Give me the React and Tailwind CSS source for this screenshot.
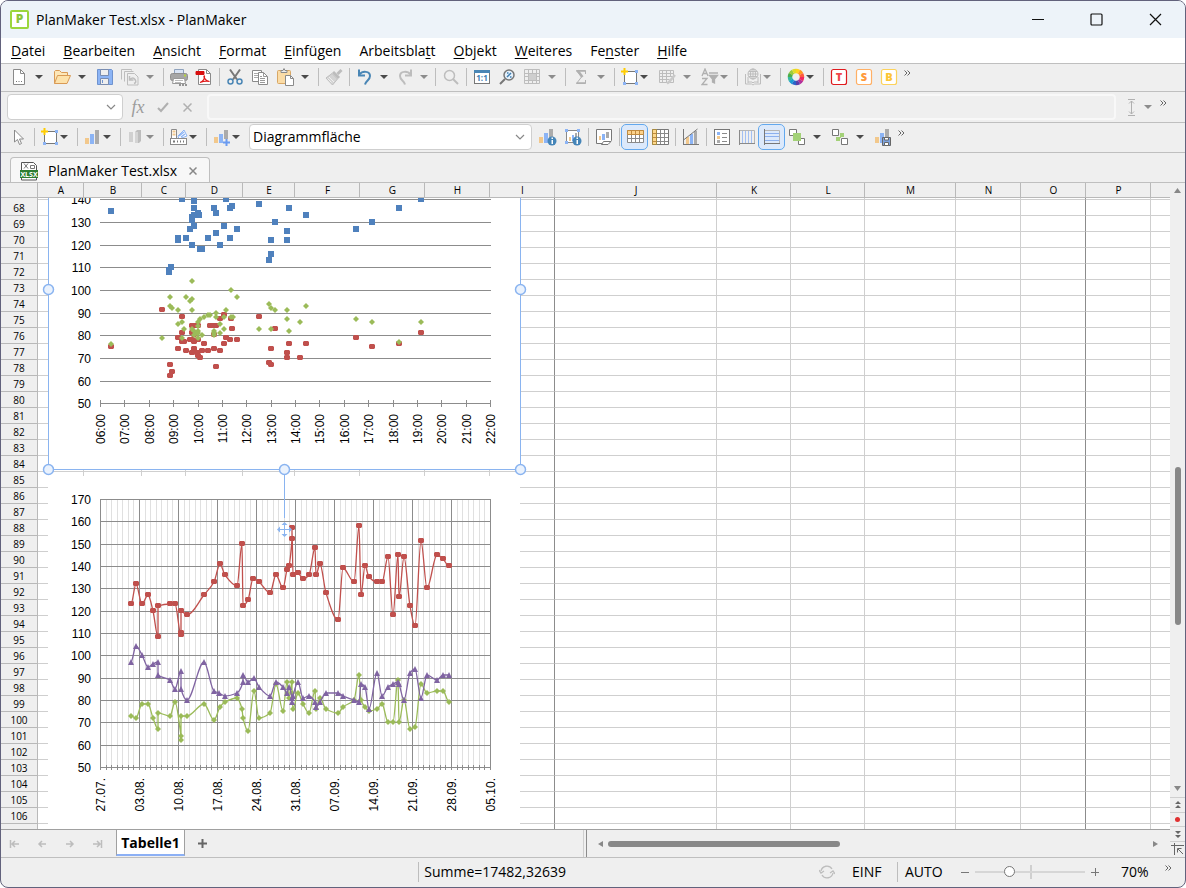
import React from 'react';
import clsx from 'clsx';

const GRAY = '#8a8a8a';
const PALE = '#bdbdbd';
const BLUE = '#8cb4f5';
const SAND = '#f2c88c';

/* ---------- icons ---------- */

const Svg = ({ children, size = 18, ...rest }) => (
  <svg width={size} height={size} viewBox="0 0 18 18" fill="none" stroke={GRAY} aria-hidden="true" {...rest}>
    {children}
  </svg>
);

const NewDoc = () => (
  <Svg>
    <path d="M3.5 1.5h7l4 4v11h-11z" fill="#fff" />
    <path d="M10.5 1.5v4h4" />
    <path d="M6 13.5h1M8.5 13.5h1M11 13.5h1" stroke="#777" />
  </Svg>
);

const Folder = () => (
  <Svg>
    <path d="M1.5 15.5v-12l1-1h4l2 2h6v3" fill="#fde7b8" stroke="#d99a55" />
    <path d="M1.5 15.5l3-8h13l-3.5 8z" fill="#fde2ab" stroke="#d99a55" />
  </Svg>
);

const Save = () => (
  <Svg>
    <path d="M1.5 1.5h14l1 1v14h-15z" fill={BLUE} stroke="#6f93cf" />
    <path d="M4.5 1.5h8v6h-8z" fill="#efefef" stroke="#7a8db0" />
    <path d="M4.5 10.5h8v6h-8z" fill="#efefef" stroke="#7a8db0" />
    <path d="M6.5 12v3" stroke="#6f93cf" />
  </Svg>
);

const History = () => (
  <Svg stroke={PALE}>
    <path d="M.5 11.5v-10h10v1M3.5 13.500v-10h9" />
    <path d="M6.5 5.5h7l3.500 3.500v8h-10.500z" fill="#efefef" />
    <path d="M8.5 8v4h4M9 11.500q3-3 5 0t-1 4" strokeWidth="1.5" />
  </Svg>
);

const Printer = () => (
  <Svg>
    <path d="M4.5 6v-4.5h9v4.5" fill="#d9e4f5" stroke="#8fa2bd" />
    <rect x=".5" y="5.5" width="17" height="7" rx="2" fill="#a6a6a6" stroke="#8f8f8f" />
    <path d="M14 7.5h2" stroke="#b4d33a" strokeWidth="2" />
    <path d="M3.5 10.5h11l1 5h-13z" fill="#fff" stroke="#999" />
    <path d="M5 12.5h8M5 14.5h6" stroke="#bbb" />
    <path d="M9 17h2M12 17h2M15 17h2" stroke="#777" strokeWidth="1.5" />
  </Svg>
);

const Pdf = () => (
  <Svg>
    <path d="M3.5 1.5h8l4 4v11h-12z" fill="#fff" />
    <path d="M11.5 1.5v4h4" />
    <path d="M1 3.5h8v3H1z" fill="#d80f0f" stroke="#d80f0f" />
    <path d="M5 14.5c3-1 5-4 4.500-6.500-1.500-.5 0 5 5 5.500-3-1-7 0-9.500 1" stroke="#e01818" strokeWidth="1.2" />
  </Svg>
);

const Scissors = () => (
  <Svg strokeWidth="1.5">
    <path d="M4 1.5l7 10M14 1.5l-7 10" stroke="#777" strokeWidth="2" />
    <circle cx="4.5" cy="13.5" r="2.5" stroke="#4a86b5" />
    <circle cx="13.5" cy="13.5" r="2.5" stroke="#4a86b5" />
  </Svg>
);

const Copy = () => (
  <Svg>
    <path d="M1.5 2.5h9v11h-9z" fill="#fff" />
    <path d="M3 5.5h4M3 7.5h4M3 9.5h4" stroke="#aaa" />
    <path d="M7.5 4.5h5l4 4v8h-9z" fill="#fff" />
    <path d="M12.5 4.5v4h4M9 8.5h2M9 10.5h5M9 12.5h5M9 14.5h5" stroke="#999" />
  </Svg>
);

const Paste = () => (
  <Svg>
    <rect x="1.5" y="2.5" width="13" height="13" rx="1" fill="#fbdca6" stroke="#d8a765" />
    <path d="M5 4.5v-2h2l1-2 1 2h2v2z" fill="#eee" />
    <path d="M9.5 7.5h5l3 3v7h-8z" fill="#fff" />
    <path d="M14.5 7.5v3h3" />
  </Svg>
);

const Brush = () => (
  <Svg stroke={PALE}>
    <path d="M16.5 2l-4 4" strokeWidth="3" />
    <path d="M8 4l6 6" strokeWidth="3" />
    <path d="M7 5.5l5.500 5.500-5 6-6.500-7z" fill="#d4d4d4" />
    <path d="M4 9l5 5M2.500 10.500l4 4" stroke="#efefef" />
  </Svg>
);

const Undo = () => (
  <Svg stroke="#4a86b5" strokeWidth="2">
    <path d="M3 1.5v6h6" />
    <path d="M3.5 6.5c3-4 10.500-3.500 10.500 1.500 0 4-4 4.500-5 8.500" />
  </Svg>
);

const Redo = () => (
  <Svg stroke={PALE} strokeWidth="2">
    <path d="M15 1.5v6h-6" />
    <path d="M14.5 6.5c-3-4-10.500-3.500-10.500 1.500 0 4 4 4.500 5 8.500" />
  </Svg>
);

const Lens = () => (
  <Svg stroke={PALE} strokeWidth="1.5">
    <circle cx="7.5" cy="7.5" r="5" />
    <path d="M11 11l5 5" strokeWidth="2" />
  </Svg>
);

const OneToOne = () => (
  <Svg>
    <rect x="1.5" y="2.5" width="15" height="13" fill="#fff" stroke="#777" />
    <path d="M1 3.5h16" stroke="#4a86b5" strokeWidth="3" />
    <text x="9" y="13" fontSize="8" fontWeight="700" textAnchor="middle" fill="#3f7fb2" stroke="none" fontFamily="Open Sans, sans-serif">1:1</text>
  </Svg>
);

const ZoomPercent = () => (
  <Svg>
    <circle cx="11" cy="7" r="5" fill="#e6f1fb" stroke="#777" strokeWidth="1.5" />
    <path d="M7 11l-5 5" stroke="#777" strokeWidth="2" />
    <path d="M9 9l4-4M9 5h1.500M12 9h1.500" stroke="#3f7fb2" strokeWidth="1.5" />
  </Svg>
);

const GridPale = () => (
  <Svg stroke={PALE}>
    <path d="M1.5 1.5h15v14h-15zM1.5 5.5h15M1.5 8.5h15M1.5 12.5h15M5.5 1.5v14M9.5 1.5v14M13.5 1.5v14" />
    <path d="M6 6h7v6h-7z" fill="#cfcfcf" stroke="none" />
  </Svg>
);

const Sigma = () => (
  <Svg stroke="#b0b0b0">
    <path d="M13.5 6v-3.500h-9l5 6.500-5 6.500h9v-3.500" />
    <path d="M5.500 2.500l5 6.500" strokeWidth="2.5" />
    <path d="M4.500 15h9M4.500 3h9" strokeWidth="1.5" />
  </Svg>
);

const NewObject = () => (
  <Svg>
    <rect x="3.5" y="3.5" width="12" height="12" fill="#fff" stroke="#777" />
    <path d="M14 2h3v3h-3zM2 14h3v3h-3zM14 14h3v3h-3z" fill={BLUE} stroke="none" />
    <path d="M3.5 0v7M0 3.5h7" stroke="#fc0" strokeWidth="2" />
  </Svg>
);

const GridEdit = () => (
  <Svg stroke={PALE}>
    <path d="M1.5 2.5h14v12h-14zM1.5 5.5h14M1.5 8.5h14M1.5 11.5h10M4.5 2.5v12M8.5 2.5v12M12.5 2.5v6" />
    <path d="M17 7l-6 7-2 1.500" strokeWidth="2.5" stroke="#c9c9c9" />
  </Svg>
);

const SortFilter = () => (
  <Svg stroke="#b0b0b0" strokeWidth="1.3">
    <path d="M1 8l3-7 3 7M2 5.500h4M1 10.500h5l-5 6h5.500" />
    <path d="M8 5h9" />
    <path d="M8.500 7.500h8l-3 3.500v4l-2-1v-3z" fill="#b0b0b0" />
  </Svg>
);

const Globe = () => (
  <Svg stroke={PALE}>
    <path d="M1.5 6v10h6l1.500 1 1.500-1h6v-10" />
    <path d="M4 15v-6M14 15v-6M4 14h4l1 1 1-1h4" />
    <circle cx="9" cy="6" r="5" fill="#efefef" />
    <path d="M4 6h10M9 1v10M5 3.500h8M5 8.500h8" />
    <ellipse cx="9" cy="6" rx="2.5" ry="5" />
  </Svg>
);

const wheelColors = ['#ffd21f', '#ff9a1f', '#ff5a3c', '#f2265e', '#b2309b', '#5a3fa8', '#2a64c8', '#1c9ad6', '#38b8a0', '#4cae4c', '#9ccc3c', '#e0dc28'];

const ColorWheel = () => (
  <Svg>
    {wheelColors.map((c, i) => (
      <circle key={c} cx="9" cy="9" r="6" stroke={c} strokeWidth="4.5" strokeDasharray="3.2 100" transform={`rotate(${i * 30 - 90} 9 9)`} />
    ))}
  </Svg>
);

const LetterBadge = ({ letter, color, line }) => (
  <Svg>
    <rect x="1.5" y="1.5" width="15" height="15" rx="2" fill="#fff" stroke={line} strokeWidth="1.2" />
    <text x="9" y="13" fontSize="11" fontWeight="800" textAnchor="middle" fill={color} stroke="none" fontFamily="Open Sans, sans-serif">{letter}</text>
  </Svg>
);

const Cursor = () => (
  <Svg>
    <path d="M4.5 2v12l3-2.500 2 5 2-1-2-4.500h4z" fill="#fff" />
  </Svg>
);

const Bars = () => (
  <Svg stroke="none">
    <path d="M1 10h4v6h-4z" fill={SAND} />
    <path d="M6 6h4v10h-4z" fill={BLUE} />
    <path d="M11 2h4v14h-4z" fill="#ababab" />
  </Svg>
);

const BarsPale = () => (
  <Svg stroke="none">
    <path d="M2 4h4v10h-4z" fill="#d0d0d0" />
    <path d="M8 4l2-2h4v11l-2 2h-4z" fill="#bdbdbd" />
    <path d="M8 4h3v11h-3z" fill="#d4d4d4" />
  </Svg>
);

const ChartStyle = () => (
  <Svg>
    <path d="M1.5 1.5h5v9h-5z" fill="#fff" />
    <path d="M2.5 3.5h3M2.5 6.5h3" stroke={SAND} strokeWidth="2" />
    <path d="M8 8l6-6 3 6-8 3z" fill="#fff" stroke={BLUE} />
    <path d="M9 8l5-4M11 9l4-3" stroke={BLUE} strokeWidth="1.5" />
    <rect x=".5" y="10.5" width="16" height="6" fill="#fff" />
    <path d="M3 13.5h2M7 13.5h1M10 13.5h1M13 13.5h1" stroke="#777" strokeWidth="2" />
  </Svg>
);

const BarsPlus = () => (
  <Svg stroke="none">
    <path d="M1 9h4v6h-4z" fill={SAND} />
    <path d="M6 6h4v9h-4z" fill={BLUE} />
    <path d="M11 2h4v9h-4z" fill="#ababab" />
    <path d="M13.5 11v7M10 14.5h7" stroke="#6b9bf0" strokeWidth="2" />
  </Svg>
);

const InfoDot = () => (
  <g stroke="none">
    <circle cx="13" cy="13" r="4.5" fill="#4585b8" />
    <path d="M12.5 12h1.500v4h-1.500zM12.500 9.500h1.500v1.500h-1.500z" fill="#fff" />
  </g>
);

const BarsInfo = () => (
  <Svg stroke="none">
    <path d="M0 9h4v6h-4z" fill={SAND} />
    <path d="M5 5h4v10h-4z" fill={BLUE} />
    <path d="M10 1h4v9h-4z" fill="#ababab" />
    <InfoDot />
  </Svg>
);

const FrameInfo = () => (
  <Svg>
    <rect x="2.5" y="2.5" width="12" height="12" fill="#fff" />
    <path d="M1 1h3v3h-3zM13 1h3v3h-3zM1 13h3v3h-3z" fill={BLUE} stroke="none" />
    <path d="M5 9h2v4h-2z" fill={SAND} stroke="none" />
    <path d="M8 7h2v6h-2z" fill={BLUE} stroke="none" />
    <path d="M11 5h2v4h-2z" fill="#ababab" stroke="none" />
    <InfoDot />
  </Svg>
);

const ChartSheet = () => (
  <Svg>
    <path d="M1.5 1.5h15v11l-3 3h-12z" fill="#fff" stroke="#777" />
    <path d="M4 8h2v4h-2z" fill={SAND} stroke="none" />
    <path d="M7 6h3v6h-3z" fill={BLUE} stroke="none" />
    <path d="M11 4h3v6h-3z" fill="#ababab" stroke="none" />
    <path d="M6.5 16.5l2-3h7.500l-3 3z" fill="#fff" stroke="#777" />
  </Svg>
);

const RowsTable = () => (
  <Svg>
    <path d="M1.5 2.5h16v12h-16z" fill="#fff" />
    <path d="M1.5 2.5h16v4h-16z" fill="#fcd28c" stroke="#c08a3e" />
    <path d="M1.5 10.5h16M5.5 7v7.500M9.5 7v7.500M13.5 7v7.500" />
    <path d="M5.5 3v3M9.5 3v3M13.5 3v3" stroke="#c08a3e" />
  </Svg>
);

const ColsTable = () => (
  <Svg>
    <path d="M1.5 1.5h16v15h-16z" fill="#fff" stroke="#777" />
    <path d="M1.5 1.5h4v15h-4z" fill="#fcd88c" stroke="#a98a3e" />
    <path d="M6 5.5h11M6 9.5h11M6 13.5h11M9.5 2v14M13.5 2v14" />
    <path d="M2 5.5h3M2 9.5h3M2 13.5h3" stroke="#c08a3e" />
  </Svg>
);

const TrendChart = () => (
  <Svg>
    <path d="M4 9h3v7h-3z" fill={SAND} stroke="none" />
    <path d="M8 6h3v10h-3z" fill={BLUE} stroke="none" />
    <path d="M12 3h3v13h-3z" fill="#ababab" stroke="none" />
    <path d="M1.5 1v16M1 16.5h16M1.5 12l14-11" stroke="#777" />
  </Svg>
);

const Legend = () => (
  <Svg>
    <rect x="1.5" y="1.5" width="15" height="15" fill="#fff" stroke="#777" />
    <path d="M4 4h3v3h-3z" fill={BLUE} stroke="none" />
    <path d="M4 8h3v3h-3z" fill={SAND} stroke="none" />
    <path d="M4 12h3v3h-3z" fill="#ababab" stroke="none" />
    <path d="M9 5.5h5M9 9.5h5M9 13.5h5" />
  </Svg>
);

const VLines = () => (
  <Svg>
    <path d="M2 2.5h14.500v13" stroke="#b5b5b5" />
    <path d="M4.5 3v12M7.5 3v12M10.5 3v12M13.5 3v12" stroke="#a3c0f3" />
    <path d="M1.5 2v15M1 15.5h16" />
  </Svg>
);

const HLines = () => (
  <Svg>
    <path d="M2 2.5h14.500v13" stroke="#b5b5b5" />
    <path d="M2 5.5h14M2 8.5h14M2 12.5h14" stroke="#8cb0ee" />
    <path d="M1.5 1v16M1 15.5h16" stroke="#777" />
  </Svg>
);

const ToFront = () => (
  <Svg>
    <path d="M1.5 1.5h7v6h-7zM10.5 10.5h6v6h-6z" fill="#fff" stroke="#777" />
    <path d="M5 5h8v8h-8z" fill="#a3d177" stroke="none" />
  </Svg>
);

const Arrange = () => (
  <Svg>
    <path d="M9 5h4v4h-4zM5 9h4v4h-4zM9 9h1v1h-1z" fill="#a3d177" stroke="none" />
    <path d="M1.5 1.500h6v6h-6zM10.500 10.500h6v6h-6z" fill="#fff" stroke="#777" />
  </Svg>
);

const BarsSave = () => (
  <Svg stroke="none">
    <path d="M1 9h4v6h-4z" fill={SAND} />
    <path d="M6 5h4v10h-4z" fill={BLUE} />
    <path d="M11 1h4v8h-4z" fill="#ababab" />
    <path d="M8.5 9.5h8v8h-8z" fill="#7ea3dd" stroke="#666" />
    <path d="M10.5 9.5h4v2.500h-4zM10.5 14.5h4v3h-4z" fill="#fff" stroke="#666" />
  </Svg>
);

const Chevron = ({ className }) => (
  <svg width="10" height="6" viewBox="0 0 10 6" className={className} fill="none" stroke="#888" strokeWidth="1.2" aria-hidden="true">
    <path d="M1 1l4 4 4-4" />
  </svg>
);

/* ---------- toolbar parts ---------- */

const Tool = ({ label, icon, active }) => (
  <button type="button" aria-label={label} className={clsx('flex h-6 w-[25px] shrink-0 items-center justify-center rounded', active && 'bg-[#dce9fb] outline outline-[#62a8ee]')}>
    {icon}
  </button>
);

const Caret = ({ off, near, className }) => (
  <button type="button" aria-label="Weitere Optionen" className={clsx('flex h-6 shrink-0 items-center justify-center', near ? '-ml-1.5 mr-[3px] w-[15px]' : className || 'mr-[3px] w-[15px]')}>
    <svg width="8" height="4" viewBox="0 0 8 4" fill={off ? '#8c8c8c' : '#4a4a4a'} aria-hidden="true">
      <path d="M0 0h8l-4 4z" />
    </svg>
  </button>
);

const Sep = () => <span className="ml-[3px] mr-0.5 h-[18px] w-px shrink-0 bg-[#bdbdbd]" />;

const More = () => (
  <button type="button" aria-label="Mehr" className="mb-2 -ml-0.5 flex w-4 shrink-0 justify-center">
    <svg width="7" height="6" viewBox="0 0 7 6" fill="none" stroke="#666" aria-hidden="true">
      <path d="M.5 .5l2.500 2.500-2.500 2.500M3.500 .5l2.500 2.500-2.500 2.500" />
    </svg>
  </button>
);

const TitleBar = () => (
  <header className="flex h-[37px] items-center bg-[#edf3f9] pl-2">
    <svg width="20" height="20" viewBox="0 0 20 20" className="mr-[7px] shrink-0" aria-hidden="true">
      <rect x="2" y="1" width="17" height="17" rx="1" fill="#fff" stroke="#9bd63c" strokeWidth="2" />
      <text x="10.5" y="13" fontSize="12" fontWeight="800" textAnchor="middle" fill="#8cc43c" fontFamily="Open Sans, sans-serif">P</text>
    </svg>
    <h1 className="flex-1 truncate text-sm">PlanMaker Test.xlsx - PlanMaker</h1>
    <div className="flex">
      <button type="button" aria-label="Minimieren" className="flex h-9 w-[58px] items-center justify-center">
        <svg width="12" height="12" stroke="#111"><path d="M0 5.5h12" /></svg>
      </button>
      <button type="button" aria-label="Maximieren" className="flex h-9 w-[58px] items-center justify-center">
        <svg width="13" height="13" fill="none" stroke="#111" strokeWidth="1.2"><rect x="1" y="1" width="11" height="11" rx="1" /></svg>
      </button>
      <button type="button" aria-label="Schließen" className="flex h-9 w-[60px] items-center justify-center">
        <svg width="13" height="13" stroke="#111" strokeWidth="1.2"><path d="M1 1l11 11M12 1l-11 11" /></svg>
      </button>
    </div>
  </header>
);

// [before, access key, after]
const menus = [
  ['', 'D', 'atei'],
  ['', 'B', 'earbeiten'],
  ['', 'A', 'nsicht'],
  ['', 'F', 'ormat'],
  ['', 'E', 'infügen'],
  ['Arbeitsbla', 't', 't'],
  ['', 'O', 'bjekt'],
  ['', 'W', 'eiteres'],
  ['Fe', 'n', 'ster'],
  ['', 'H', 'ilfe'],
];

const MenuBar = () => (
  <nav className="flex h-[25px] items-center bg-white pl-px text-sm">
    {menus.map(([pre, key, post]) => (
      <button type="button" key={pre + key + post} className="px-[9px]">
        {pre}
        <span className="underline underline-offset-2">{key}</span>
        {post}
      </button>
    ))}
  </nav>
);

const StandardBar = () => (
  <div className="flex h-7 items-center border-t border-[#bfbfbf] pb-0.5 pl-[5px]">
    <Tool label="Neu" icon={<NewDoc />} />
    <Caret />
    <Tool label="Öffnen" icon={<Folder />} />
    <Caret />
    <Tool label="Speichern" icon={<Save />} />
    <Tool label="Versionen" icon={<History />} />
    <Caret off />
    <Sep />
    <Tool label="Drucken" icon={<Printer />} />
    <Tool label="PDF-Export" icon={<Pdf />} />
    <Sep />
    <Tool label="Ausschneiden" icon={<Scissors />} />
    <Tool label="Kopieren" icon={<Copy />} />
    <Tool label="Einfügen" icon={<Paste />} />
    <Caret />
    <Sep />
    <Tool label="Format übertragen" icon={<Brush />} />
    <Sep />
    <Tool label="Rückgängig" icon={<Undo />} />
    <Caret className="mr-0.5 w-[13px]" />
    <Tool label="Wiederherstellen" icon={<Redo />} />
    <Caret off className="mr-0.5 w-[13px]" />
    <Sep />
    <Tool label="Suchen" icon={<Lens />} />
    <Sep />
    <Tool label="Originalgröße" icon={<OneToOne />} />
    <Tool label="Zoomstufe" icon={<ZoomPercent />} />
    <Tool label="Fixieren" icon={<GridPale />} />
    <Caret off />
    <Sep />
    <Tool label="Summe" icon={<Sigma />} />
    <Caret off />
    <Sep />
    <Tool label="Rahmen einfügen" icon={<NewObject />} />
    <Caret near />
    <Tool label="Tabelle bearbeiten" icon={<GridEdit />} />
    <Caret off />
    <Tool label="Sortieren und filtern" icon={<SortFilter />} />
    <Caret off near />
    <Sep />
    <Tool label="Recherche" icon={<Globe />} />
    <Caret off near />
    <Sep />
    <Tool label="Farben" icon={<ColorWheel />} />
    <Caret near />
    <Sep />
    <Tool label="TextMaker" icon={<LetterBadge letter="T" color="#f0484b" line="#e01b1f" />} />
    <Tool label="Presentations" icon={<LetterBadge letter="S" color="#ff9a3c" line="#ffb066" />} />
    <Tool label="BasicMaker" icon={<LetterBadge letter="B" color="#fcc534" line="#fcd25c" />} />
    <More />
  </div>
);

const FormulaBar = () => (
  <div className="flex h-[31px] items-center border-t border-[#bfbfbf] pl-1.5">
    <div className="relative h-[26px] w-[116px] shrink-0">
      <select aria-label="Namensfeld" className="h-full w-full appearance-none rounded border border-[#cfcfcf] bg-white">
        <option></option>
      </select>
      <Chevron className="pointer-events-none absolute right-[7px] top-2.5" />
    </div>
    <button type="button" aria-label="Funktion einfügen" className="ml-[3px] flex w-6 shrink-0 justify-center font-['Liberation_Serif',serif] text-lg leading-6 text-[#9c9c9c] italic">fx</button>
    <button type="button" aria-label="Übernehmen" className="flex w-[25px] shrink-0 justify-center">
      <svg width="12" height="11" fill="none" stroke="#b0b0b0" strokeWidth="2"><path d="M1 6l3 3 7-8" /></svg>
    </button>
    <button type="button" aria-label="Verwerfen" className="flex w-[25px] shrink-0 justify-center">
      <svg width="9" height="9" stroke="#b0b0b0" strokeWidth="1.5"><path d="M.5 .5l8 8M8.500 .5l-8 8" /></svg>
    </button>
    <input aria-label="Formel" disabled className="ml-[7px] h-[26px] min-w-0 flex-1 rounded border-2 border-[#f8f8f8] bg-[#efefef] px-2 text-sm" />
    <button type="button" aria-label="Höhe" className="ml-[3px] flex w-[25px] shrink-0 justify-center">
      <svg width="9" height="17" fill="none" stroke="#b0b0b0"><path d="M1 .5h7M1 16.5h7M4.5 2v13M2 4.5l2.500-2.500 2.500 2.500M2 12.500l2.500 2.500 2.500-2.500" /></svg>
    </button>
    <Caret off className="-ml-1 w-[15px]" />
    <span className="mr-3.5 ml-0.5 flex">
      <More />
    </span>
  </div>
);

const ChartBar = () => (
  <div className="flex h-[30px] items-center border-t border-[#bfbfbf] pb-px pl-[5px]">
    <Tool label="Objekte auswählen" icon={<Cursor />} />
    <Sep />
    <Tool label="Objekt einfügen" icon={<NewObject />} />
    <Caret near />
    <Sep />
    <Tool label="Diagrammtyp" icon={<Bars />} />
    <Caret near />
    <Sep />
    <Tool label="3D-Ansicht" icon={<BarsPale />} />
    <Caret off near />
    <Sep />
    <Tool label="Farbpalette" icon={<ChartStyle />} />
    <Caret near />
    <Sep />
    <Tool label="Element hinzufügen" icon={<BarsPlus />} />
    <Caret near />
    <div className="relative mr-[3px] ml-[3px] h-[26px] w-[283px] shrink-0">
      <select aria-label="Diagrammelement" className="h-full w-full appearance-none rounded border border-[#cfcfcf] bg-white px-[3px] text-sm">
        <option>Diagrammfläche</option>
      </select>
      <Chevron className="pointer-events-none absolute right-[7px] top-2.5" />
    </div>
    <Tool label="Diagrammeigenschaften" icon={<BarsInfo />} />
    <Tool label="Objekteigenschaften" icon={<FrameInfo />} />
    <Sep />
    <Tool label="Diagrammblatt" icon={<ChartSheet />} />
    <Sep />
    <Tool label="Datenreihen in Zeilen" icon={<RowsTable />} active />
    <Tool label="Datenreihen in Spalten" icon={<ColsTable />} />
    <Sep />
    <Tool label="Trendlinie" icon={<TrendChart />} />
    <Sep />
    <Tool label="Legende" icon={<Legend />} />
    <Tool label="Vertikale Gitternetzlinien" icon={<VLines />} />
    <Tool label="Horizontale Gitternetzlinien" icon={<HLines />} active />
    <Tool label="Nach vorne" icon={<ToFront />} />
    <Caret />
    <Tool label="Anordnen" icon={<Arrange />} />
    <Caret />
    <Tool label="Als Grafik speichern" icon={<BarsSave />} />
    <More />
  </div>
);

const DocTabs = () => (
  <div className="flex h-[31px] items-end border-y border-[#bfbfbf] pl-[9px]">
    <div className="flex h-[25px] w-[200px] items-center rounded-t border border-b-0 border-[#bfbfbf] bg-[#f7f7f7] pt-px pl-[9px]">
      <svg width="18" height="20" viewBox="0 0 18 20" className="mr-2.5 shrink-0" aria-hidden="true">
        <path d="M1.5 9v-7.500h12l3 3v14.500h-15z" fill="#fff" stroke="#555" />
        <path d="M4 2.500l4 5M8 2.500l-4 5M10.500 7.500v-3h4v3z" fill="none" stroke="#777" />
        <path d="M0 9h18v8h-18z" fill="#2f7d32" />
        <text x="9" y="16" fontSize="7" fontWeight="700" textAnchor="middle" fill="#fff" fontFamily="Open Sans, sans-serif">XLSX</text>
      </svg>
      <span className="text-sm">PlanMaker Test.xlsx</span>
      <button type="button" aria-label="Tab schließen" className="ml-3">
        <svg width="8" height="8" stroke="#888" strokeWidth="1.5"><path d="M.5 .5l7 7M7.500 .5l-7 7" /></svg>
      </button>
    </div>
  </div>
);

/* ---------- worksheet ---------- */

const columns = [
  ['A', 46], ['B', 58], ['C', 44], ['D', 57], ['E', 52], ['F', 65], ['G', 65], ['H', 65], ['I', 65],
  ['J', 162], ['K', 74], ['L', 74], ['M', 91], ['N', 65], ['O', 65], ['P', 65],
];
const rows = Array.from({ length: 39 }, (_, i) => 68 + i);
const pageEnd = ['I', 'O'];

const cellClass = (name) => clsx('border-r border-b border-b-[#cfcfcf] p-0', pageEnd.includes(name) ? 'border-r-[#8c8c8c]' : 'border-r-[#cfcfcf]');

const Grid = () => (
  <table className="w-full table-fixed border-separate border-spacing-0 bg-white text-center text-[10px] leading-[14px]">
    <colgroup>
      <col className="w-[37px]" />
      {columns.map(([name, width]) => (
        <col key={name} style={{ width }} />
      ))}
      <col />
    </colgroup>
    <thead>
      <tr className="h-[15px] bg-[#efefef]">
        <th className="border-r border-b border-[#b9b9b9] p-0" />
        {columns.map(([name]) => (
          <th key={name} className="border-r border-b border-[#b9b9b9] p-0 pl-px font-normal">{name}</th>
        ))}
        <th className="border-b border-[#b9b9b9] p-0" />
      </tr>
    </thead>
    <tbody>
      <tr className="h-0.5">
        <th className="border-r border-[#b9b9b9] bg-[#efefef] p-0" />
        {columns.map(([name]) => (
          <td key={name} className={cellClass(name)} />
        ))}
        <td className="border-b border-[#cfcfcf] p-0" />
      </tr>
      {rows.map((n) => (
        <tr key={n} className="h-4">
          <th className="border-r border-b border-[#b9b9b9] bg-[#efefef] p-0 font-normal">{n}</th>
          {columns.map(([name]) => (
            <td key={name} className={cellClass(name)} />
          ))}
          <td className="border-b border-[#cfcfcf] p-0" />
        </tr>
      ))}
      <tr className="h-4">
        <th className="border-r border-[#b9b9b9] bg-[#efefef] p-0" />
        {columns.map(([name]) => (
          <td key={name} className={cellClass(name)} />
        ))}
        <td />
      </tr>
    </tbody>
  </table>
);

/* ---------- charts ---------- */

// x is the distance from the value axis, y the measured value
const systolic = [
  [11, 135], [82, 140], [94, 140], [94, 139], [94, 136], [94, 133], [98, 134], [99, 133], [92, 132], [92, 131], [94, 128], [90, 127],
  [78, 123], [78, 122], [86, 123], [92, 120], [100, 118], [102, 118], [108, 123], [114, 136], [116, 134], [116, 125], [120, 120],
  [124, 128], [126, 140], [130, 136], [132, 137], [130, 123], [137, 127], [159, 138], [175, 130], [171, 122], [171, 116], [169, 113],
  [187, 126], [187, 122], [189, 136], [71, 110], [69, 109], [69, 108], [206, 133], [256, 127], [272, 130], [299, 136], [321, 140],
];
const diastolic = [
  [11, 75], [62, 91], [70, 67], [72, 64], [70, 62], [78, 79], [78, 74], [82, 88], [82, 81], [82, 77], [84, 77], [86, 73], [92, 84],
  [96, 84], [98, 84], [92, 81], [94, 80], [90, 78], [92, 78], [94, 77], [98, 78], [92, 72], [94, 74], [97, 72], [98, 71], [100, 70],
  [102, 73], [104, 76], [108, 73], [114, 74], [110, 84], [112, 84], [116, 84], [114, 80], [120, 87], [124, 89], [131, 87], [132, 83],
  [126, 79], [130, 78], [137, 78], [124, 76], [120, 73], [116, 66], [159, 88], [175, 83], [171, 74], [169, 68], [171, 67], [187, 72],
  [187, 70], [189, 76], [200, 70], [206, 76], [256, 79], [272, 75], [299, 76], [321, 81],
];
const pulse = [
  [11, 76], [92, 104], [131, 100], [70, 97], [86, 97], [90, 95], [92, 96], [137, 97], [70, 93], [72, 92], [78, 91], [92, 91], [78, 85],
  [82, 86], [84, 83], [82, 79], [62, 79], [110, 89], [108, 89], [116, 90], [126, 91], [104, 88], [100, 87], [98, 86], [116, 88],
  [124, 88], [131, 88], [133, 88], [98, 84], [92, 83], [94, 82], [98, 82], [96, 81], [98, 81], [94, 80], [98, 79], [102, 80],
  [114, 82], [114, 81], [114, 80], [120, 85], [124, 83], [120, 81], [159, 83], [171, 83], [169, 94], [171, 92], [175, 91],
  [187, 91], [187, 87], [189, 82], [200, 86], [206, 93], [256, 87], [272, 86], [299, 77], [321, 86],
];

const redLine = [
  [31, 123], [36, 132], [42, 123], [48, 127], [53, 120], [58, 108], [58, 122], [70, 123], [75, 123], [81, 109], [81, 110], [81, 120],
  [87, 118], [104, 127], [114, 133], [120, 141], [125, 136], [137, 131], [142, 150], [143, 122], [148, 125], [153, 134], [159, 133],
  [170, 128], [176, 136], [183, 130], [187, 138], [189, 140], [192, 152], [192, 157], [193, 136], [198, 137], [203, 134], [209, 136],
  [215, 148], [216, 136], [220, 141], [226, 128], [238, 116], [243, 139], [254, 133], [259, 158], [261, 127], [265, 140], [269, 135],
  [277, 133], [282, 133], [288, 144], [293, 118], [298, 145], [299, 126], [304, 144], [310, 122], [315, 113], [321, 151], [327, 130],
  [337, 145], [343, 143], [349, 140],
];
const purpleLine = [
  [31, 97], [36, 104], [42, 100], [48, 95], [53, 96], [58, 97], [58, 91], [70, 89], [75, 85], [81, 93], [81, 85], [87, 80], [104, 97],
  [114, 84], [119, 83], [125, 82], [137, 83], [143, 88], [143, 91], [148, 88], [154, 90], [159, 86], [170, 82], [176, 88], [183, 86],
  [187, 83], [189, 86], [192, 81], [192, 79], [193, 82], [198, 88], [203, 81], [209, 82], [215, 79], [216, 77], [220, 79], [226, 83],
  [238, 83], [243, 82], [254, 80], [259, 79], [261, 87], [265, 86], [269, 76], [277, 92], [282, 82], [288, 86], [293, 87], [298, 88],
  [299, 87], [304, 80], [310, 92], [315, 94], [321, 81], [327, 91], [337, 89], [343, 91], [349, 91],
];
const greenLine = [
  [31, 73], [36, 72], [42, 78], [48, 78], [53, 72], [58, 67], [58, 74], [70, 73], [75, 79], [81, 64], [81, 62], [81, 73], [87, 73],
  [104, 78], [114, 71], [120, 77], [125, 79], [137, 81], [142, 76], [143, 72], [148, 66], [154, 84], [159, 72], [170, 74], [176, 87],
  [183, 75], [187, 88], [189, 81], [192, 88], [192, 83], [193, 76], [198, 83], [203, 78], [209, 74], [215, 84], [216, 76], [220, 81],
  [226, 76], [238, 74], [243, 77], [254, 80], [259, 91], [261, 80], [265, 77], [269, 75], [277, 76], [282, 78], [288, 70], [293, 70],
  [298, 89], [299, 70], [304, 80], [310, 67], [315, 68], [321, 87], [327, 83], [337, 84], [343, 84], [349, 79],
];

const shapes = {
  square: 'M-3-3h6v6h-6z',
  dot: 'M-2-3h4l1 1v3l-1 1h-4l-1-1v-3z',
  diamond: 'M0-3l3 3-3 3-3-3z',
  triangle: 'M0-3l3 6h-6z',
};

const Markers = ({ points, shape, color, y }) => (
  <g fill={color}>
    {points.map(([x, v], i) => (
      <path key={i} d={shapes[shape]} transform={`translate(${x + 52} ${y(v)})`} />
    ))}
  </g>
);

// smooth curve that never swings past its own points
const curve = (points, y) => {
  const p = points.map(([x, v]) => [x + 52, y(v)]);
  const slope = (a, b) => (b[1] - a[1]) / Math.max(b[0] - a[0], 0.5);
  const tangents = p.map((pt, i) => {
    if (i === 0 || i === p.length - 1) return 0;
    const a = slope(p[i - 1], pt);
    const b = slope(pt, p[i + 1]);
    return a * b <= 0 ? 0 : (2 * a * b) / (a + b);
  });
  return p.reduce((d, pt, i) => {
    if (i === 0) return `M${pt[0]} ${pt[1]}`;
    const q = p[i - 1];
    const h = (pt[0] - q[0]) / 3;
    return `${d}C${q[0] + h} ${q[1] + tangents[i - 1] * h} ${pt[0] - h} ${pt[1] - tangents[i] * h} ${pt[0]} ${pt[1]}`;
  }, '');
};

const range = (from, to, step = 1) => Array.from({ length: (to - from) / step + 1 }, (_, i) => from + i * step);

const textProps = { fontFamily: '"Liberation Sans", Arial, sans-serif', fontSize: 12, fill: '#000', textAnchor: 'end' };

const hours = range(6, 22);

const HourChart = () => {
  const y = (v) => Math.round(205.4 - (v - 50) * 2.269);
  const x = (h) => 52.5 + Math.round((h - 6) * 24.375);
  return (
    <svg width="472" height="271" role="img" aria-label="Werte nach Uhrzeit" className="block">
      <g stroke="#8c8c8c" shapeRendering="crispEdges">
        {range(50, 140, 10).map((v) => (
          <path key={v} d={`M52 ${y(v) + 0.5}h391`} />
        ))}
        {hours.map((h) => (
          <path key={h} d={`M${x(h)} 202v7`} />
        ))}
      </g>
      <g {...textProps}>
        {range(50, 140, 10).map((v) => (
          <text key={v} x="43" y={y(v) + 5}>{v}</text>
        ))}
        {hours.map((h) => (
          <text key={h} transform={`translate(${x(h) + 4.5} 216) rotate(-90)`}>{`${String(h).padStart(2, '0')}:00`}</text>
        ))}
      </g>
      <Markers points={systolic} shape="square" color="#4f81bd" y={y} />
      <Markers points={diastolic} shape="dot" color="#c0504d" y={y} />
      <Markers points={pulse} shape="diamond" color="#9bbb59" y={y} />
    </svg>
  );
};

const days = ['27.07.', '03.08.', '10.08.', '17.08.', '24.08.', '31.08.', '07.09.', '14.09.', '21.09.', '28.09.', '05.10.'];

const series = [
  { points: redLine, shape: 'dot', color: '#c0504d' },
  { points: greenLine, shape: 'diamond', color: '#9bbb59' },
  { points: purpleLine, shape: 'triangle', color: '#8064a2' },
];

const DayChart = () => {
  const y = (v) => Math.round(291 - (v - 50) * 2.233);
  const x = (d) => 52.5 + Math.round((d * 39) / 7);
  return (
    <svg width="472" height="360" role="img" aria-label="Werte nach Datum" className="block">
      <g stroke="#e0e0e0" shapeRendering="crispEdges">
        {range(0, 70).map((d) => (
          <path key={d} d={`M${x(d)} 23v268`} />
        ))}
      </g>
      <g stroke="#8c8c8c" shapeRendering="crispEdges">
        {range(50, 170, 10).map((v) => (
          <path key={v} d={`M52 ${y(v) + 0.5}h391`} />
        ))}
        {days.map((d, i) => (
          <path key={d} d={`M${x(i * 7)} 23v271`} />
        ))}
        {range(0, 70).map((d) => (
          <path key={d} d={`M${x(d)} 289v5`} />
        ))}
      </g>
      <g {...textProps}>
        {range(50, 170, 10).map((v) => (
          <text key={v} x="43" y={y(v) + 5}>{v}</text>
        ))}
        {days.map((d, i) => (
          <text key={d} transform={`translate(${x(i * 7) + 4.5} 302) rotate(-90)`}>{d}</text>
        ))}
      </g>
      {series.map((s) => (
        <g key={s.color}>
          <path d={curve(s.points, y)} fill="none" stroke={s.color} strokeWidth="1.3" />
          <Markers {...s} y={y} />
        </g>
      ))}
    </svg>
  );
};

const handles = [[8, 91], [480, 91], [8, 271], [244, 271], [480, 271]];

const Selection = () => (
  <svg width="490" height="345" fill="none" stroke="#8ab4f0" className="pointer-events-none absolute top-0 -left-2" aria-hidden="true">
    <path d="M8.5 0v271.500h472v-271.500M244.500 271v49" />
    {handles.map(([cx, cy]) => (
      <circle key={`${cx}-${cy}`} cx={cx + 0.5} cy={cy + 0.5} r="5" fill="#eaf2fd" strokeWidth="1.5" />
    ))}
    <path d="M238 331.500h13M244.500 325v13" />
    <path d="M237 331.500l3-3v6zM252 331.500l-3-3v6zM244.500 324l3 3h-6zM244.500 339l3-3h-6z" fill="#8ab4f0" stroke="none" />
  </svg>
);

const Sheet = () => (
  <div className="relative min-h-0 flex-1 overflow-hidden bg-white">
    <Grid />
    <div className="absolute top-[15px] left-[47px]">
      <div className="bg-white">
        <HourChart />
      </div>
      <div className="mt-[7px] bg-white">
        <DayChart />
      </div>
      <Selection />
    </div>
  </div>
);

/* ---------- bottom ---------- */

const navPaths = {
  'Erstes Blatt': 'M1.5 0v8M3 4h7M6 1l-3 3 3 3',
  'Vorheriges Blatt': 'M2 4h7M5 1l-3 3 3 3',
  'Nächstes Blatt': 'M1 4h7M5 1l3 3-3 3',
  'Letztes Blatt': 'M8.5 0v8M0 4h7M4 1l3 3-3 3',
};

const SheetTabs = () => (
  <div className="flex h-7 shrink-0 border-t border-[#a0a0a0]">
    <div className="mr-0.5 flex w-1/2 min-w-0 border-r border-[#cfcfcf]">
      <div className="flex w-[115px] items-center justify-between pr-[13px] pl-2">
        {Object.entries(navPaths).map(([label, d]) => (
          <button type="button" key={label} aria-label={label}>
            <svg width="10" height="8" fill="none" stroke="#bdbdbd" strokeWidth="1.5"><path d={d} /></svg>
          </button>
        ))}
      </div>
      <button type="button" className="h-[26px] w-[69px] border-x border-b-2 border-x-[#a0a0a0] border-b-[#8cb0f5] bg-white pt-0.5 text-sm font-bold">Tabelle1</button>
      <button type="button" aria-label="Neues Blatt" className="ml-[13px] flex items-center">
        <svg width="9" height="9" stroke="#666" strokeWidth="2"><path d="M4.5 0v9M0 4.5h9" /></svg>
      </button>
    </div>
    <div className="flex w-1/2 items-center border-l border-[#8c8c8c] pr-3 pl-[11px]">
      <svg width="5" height="6" fill="#888"><path d="M5 0v6l-5-3z" /></svg>
      <span className="mx-[5px] flex flex-1">
        <span className="h-1.5 w-[43%] rounded-full bg-[#888]" />
      </span>
      <svg width="5" height="6" fill="#888"><path d="M0 0v6l5-3z" /></svg>
    </div>
  </div>
);

const SideBar = () => (
  <div className="flex w-[15px] shrink-0 flex-col items-center bg-[#efefef]">
    <svg width="7" height="5" fill="#888" className="mt-[5px] shrink-0"><path d="M0 5h7l-3.500-5z" /></svg>
    <span className="flex w-1.5 flex-1 flex-col pt-1.5 pb-1">
      <span className="flex-[46]" />
      <span className="flex-[27] rounded-full bg-[#888]" />
      <span className="flex-[27]" />
    </span>
    <svg width="7" height="5" fill="#888" className="mb-1.5 shrink-0"><path d="M0 0h7l-3.500 5z" /></svg>
    <button type="button" aria-label="Seite zurück" className="flex h-[15px] w-full items-center justify-center border-t border-[#cfcfcf]">
      <svg width="6" height="8" fill="#666"><path d="M3 0l3 3h-6zM3 4l3 3h-6z" /></svg>
    </button>
    <button type="button" aria-label="Ziel wählen" className="flex h-[14px] w-full items-center justify-center border-t border-[#cfcfcf]">
      <span className="h-[5px] w-[5px] rounded-full bg-[#e03030]" />
    </button>
    <button type="button" aria-label="Seite vor" className="flex h-[15px] w-full items-center justify-center border-t border-[#cfcfcf]">
      <svg width="6" height="8" fill="#666"><path d="M3 4l3-3h-6zM3 8l3-3h-6z" /></svg>
    </button>
    <button type="button" aria-label="Fenster teilen" className="flex h-4 w-full items-center justify-center border-t border-[#cfcfcf]">
      <svg width="13" height="13" fill="none" stroke="#666"><path d="M0 2.5h13M3.500 0v12M12 11l-5-5M6.500 9.500v-4h4" /></svg>
    </button>
  </div>
);

const StatusBar = () => (
  <footer className="flex h-[30px] items-center border-t border-[#bfbfbf] pb-0.5 text-sm">
    <div className="ml-auto mr-[253px] flex items-center">
      <span className="mr-[5px] h-5 w-px bg-[#bdbdbd]" />
      Summe=17482,32639
    </div>
    <button type="button" aria-label="Neu berechnen">
      <svg width="16" height="14" fill="none" stroke="#bdbdbd" strokeWidth="1.3"><path d="M2 6a6 6 0 0 1 11-2M14 8a6 6 0 0 1-11 2M0 5l2 3 3-2M16 9l-2-3-3 2" /></svg>
    </button>
    <span className="ml-[17px] w-[45px]">EINF</span>
    <span className="mr-[7px] h-5 w-px bg-[#bdbdbd]" />
    <span className="w-14">AUTO</span>
    <button type="button" aria-label="Verkleinern">
      <svg width="8" height="8" stroke="#777"><path d="M0 4.5h8" /></svg>
    </button>
    <div className="relative mx-1.5 flex h-5 w-[110px] items-center">
      <span className="absolute left-[55px] h-3.5 w-0.5 bg-[#cfcfcf]" />
      <input
        type="range"
        aria-label="Zoom"
        min="0"
        max="100"
        defaultValue="29"
        className="relative h-0.5 w-full appearance-none bg-[#d6d6d6] [&::-webkit-slider-thumb]:size-[11px] [&::-webkit-slider-thumb]:appearance-none [&::-webkit-slider-thumb]:rounded-full [&::-webkit-slider-thumb]:border [&::-webkit-slider-thumb]:border-[#777] [&::-webkit-slider-thumb]:bg-white"
      />
    </div>
    <button type="button" aria-label="Vergrößern">
      <svg width="8" height="8" stroke="#777"><path d="M0 4.5h8M4.5 0v8" /></svg>
    </button>
    <span className="ml-[22px] w-[31px]">70%</span>
    <span className="mr-[9px] ml-2.5 flex">
      <More />
    </span>
  </footer>
);

const App = () => (
  <div className="flex h-screen flex-col overflow-hidden rounded-lg border border-[#62627c] bg-[#efefef] font-['Open_Sans','Noto_Sans',sans-serif] text-black">
    <TitleBar />
    <MenuBar />
    <StandardBar />
    <FormulaBar />
    <ChartBar />
    <DocTabs />
    <main className="flex min-h-0 flex-1">
      <div className="flex min-w-0 flex-1 flex-col">
        <Sheet />
        <SheetTabs />
      </div>
      <SideBar />
    </main>
    <StatusBar />
  </div>
);

export default App;
